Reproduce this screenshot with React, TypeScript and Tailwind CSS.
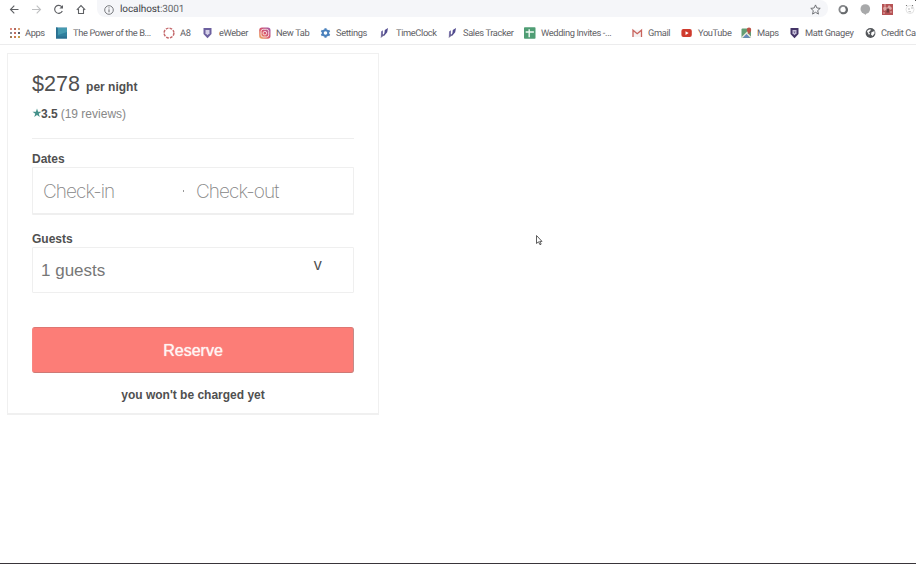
import React from "react";

function Glyph({ name }: { name: string }) {
  const p = { width: 12, height: 12, viewBox: "0 0 12 12", fill: "none", className: "shrink-0" };
  switch (name) {
    case "apps":
      return (
        <svg {...p}>
          {[1, 5, 9].map((y, r) =>
            [1, 5, 9].map((x, c) => (
              <rect key={x + "-" + y} x={x} y={y} width="2" height="2" fill={["#e08a7d", "#b06a62", "#d8a070", "#8a8a94", "#c06a60", "#59606c", "#a07a58", "#cc7a50", "#c4a04c"][r * 3 + c]} />
            ))
          )}
        </svg>
      );
    case "power":
      return (
        <svg {...p}>
          <rect y="0.5" width="11" height="11" fill="#2f7f9d" />
          <path d="M0 11.5V.5h1.500v9h9.500v2z" fill="#2a6e90" />
          <path d="M2 1h9v4L2 8z" fill="#459ab0" />
        </svg>
      );
    case "ring":
      return (
        <svg {...p}>
          <circle cx="6" cy="6" r="4.9" stroke="#c4686b" strokeWidth="1.5" strokeDasharray="2.7 1.15" />
        </svg>
      );
    case "shield":
    case "shieldDark":
      return (
        <svg {...p}>
          <path d="M1.500 1h8v6L5.500 11.200 1.500 7z" fill={name === "shield" ? "#6c609f" : "#443467"} />
          <path d="M3.500 3h4v3.200l-2 2-2-2z" fill={name === "shield" ? "#d5d0e8" : "#c6bfd8"} />
          {name === "shieldDark" && <path d="M4.500 4.500h2L5.500 6.500z" fill="#6c5e8c" />}
        </svg>
      );
    case "instagram":
      return (
        <svg {...p}>
          <defs>
            <linearGradient id="ig" x1="0" y1="1" x2="1" y2="0">
              <stop offset="0" stopColor="#efb05b" />
              <stop offset=".5" stopColor="#d8556e" />
              <stop offset="1" stopColor="#9a5cae" />
            </linearGradient>
          </defs>
          <rect x=".2" y=".5" width="11.300" height="11.300" rx="2.800" fill="url(#ig)" />
          <rect x="2" y="2.300" width="7.700" height="7.700" rx="2.200" stroke="#fbe5e6" strokeWidth=".9" />
          <circle cx="5.850" cy="6.150" r="1.800" stroke="#fbe5e6" strokeWidth=".9" />
        </svg>
      );
    case "gear":
      return (
        <svg {...p}>
          <circle cx="5.500" cy="6" r="2.800" stroke="#4b82bd" strokeWidth="2" />
          <path d="M5.500 1.200v2m0 5.600v2M1.300 3.600l1.800 1m4.800 2.800 1.800 1M1.300 8.400l1.800-1m4.800-2.800 1.800-1" stroke="#4b82bd" strokeWidth="2.100" />
        </svg>
      );
    case "swoosh":
      return (
        <svg {...p}>
          <path d="M1.800 10.500 2 4.500l2-1.300v4.300z" fill="#7d76ab" />
          <path d="M3.800 8.500 5.400 6.200l.4-3.200L9 1 8.200 5.200 5.500 8.500z" fill="#514b8f" />
          <path d="m1.600 11 1.600-4 2.400.9z" fill="#696391" />
        </svg>
      );
    case "sheet":
      return (
        <svg {...p}>
          <rect y=".3" width="11.500" height="11.500" rx=".8" fill="#4f9d74" />
          <path d="M5.200 2.200v8M1.700 5h8.200" stroke="#f0faf4" strokeWidth="1.400" />
        </svg>
      );
    case "gmail":
      return (
        <svg {...p}>
          <path d="M1.500 2.800h9V10h-9z" fill="#f6f2f2" />
          <path d="M2 10V3.200l4.200 3.500 4.300-3.500V10" stroke="#c8635d" strokeWidth="1.300" />
        </svg>
      );
    case "youtube":
      return (
        <svg {...p}>
          <rect x=".4" y="2" width="10.400" height="8" rx="2" fill="#cf3b2d" />
          <path d="m4.500 4.200 3.200 1.900-3.200 1.900z" fill="#fff" />
        </svg>
      );
    case "maps":
      return (
        <svg {...p}>
          <rect x=".5" y="1.500" width="9.500" height="9.500" rx="1" fill="#639d73" />
          <path d="m.8 10.800 4.700-4.500 4.500 4.500z" fill="#6688bd" />
          <path d="m1 10.500 7-7M5.500 6l4.500 4.500" stroke="#ece8db" strokeWidth="1.300" />
          <path d="M8 .5a2.200 2.200 0 0 0-2.200 2.200C5.800 4.500 8 7 8 7s2.200-2.500 2.200-4.300A2.200 2.200 0 0 0 8 .5z" fill="#bc5348" />
        </svg>
      );
    default:
      return (
        <svg {...p}>
          <circle cx="5.500" cy="6" r="4.900" fill="#54575b" />
          <path d="M2 4.200c1-1.500 3-2 4-1.500L4.800 4.400 3.500 5 5 6.500 4 8z" fill="#fff" />
          <path d="M6.500 5.200 9.500 4v2.500L7.500 9 6 7.500z" fill="#fff" />
        </svg>
      );
  }
}

const bookmarks = [
  { icon: "apps", label: "Apps", width: "w-[47px]", gap: "gap-[4px]" },
  { icon: "power", label: "The Power of the B...", width: "w-[107px]", gap: "gap-[5px]" },
  { icon: "ring", label: "A8", width: "w-[39px]", gap: "gap-[5px]" },
  { icon: "shield", label: "eWeber", width: "w-[57px]", gap: "gap-[5px]" },
  { icon: "instagram", label: "New Tab", width: "w-[61px]", gap: "gap-[5px]" },
  { icon: "gear", label: "Settings", width: "w-[59px]", gap: "gap-[4px]" },
  { icon: "swoosh", label: "TimeClock", width: "w-[68px]", gap: "gap-[5px]" },
  { icon: "swoosh", label: "Sales Tracker", width: "w-[77px]", gap: "gap-[4px]" },
  { icon: "sheet", label: "Wedding Invites -...", width: "w-[107px]", gap: "gap-[5px]" },
  { icon: "gmail", label: "Gmail", width: "w-[50px]", gap: "gap-[5px]" },
  { icon: "youtube", label: "YouTube", width: "w-[60px]", gap: "gap-[5px]" },
  { icon: "maps", label: "Maps", width: "w-[48px]", gap: "gap-[4px]" },
  { icon: "shieldDark", label: "Matt Gnagey", width: "w-[76px]", gap: "gap-[4px]" },
  { icon: "globe", label: "Credit Ca", width: "w-[51px]", gap: "gap-[4px]" },
];

function BrowserBar() {
  return (
    <header className="flex h-[45px] flex-col overflow-hidden border-b border-[#ececed] font-['Roboto',sans-serif] [text-rendering:geometricPrecision]">
      <div className="flex h-[19px] items-center">
        <svg width="97" height="19" viewBox="0 0 97 19" fill="none" className="shrink-0" strokeWidth="1.100">
          <path d="M18.500 9.500h-8m3.800-3.800-3.800 3.800 3.800 3.800" stroke="#5e6064" />
          <path d="M32 9.500h8.500m-3.800-3.800 3.800 3.800-3.800 3.800" stroke="#bfc0c2" />
          <path d="M62.300 11a4 4 0 1 1-.5-4.200" stroke="#5e6064" strokeWidth="1.200" />
          <path d="M63 5v3.600h-3.600z" fill="#5e6064" />
          <path d="m76.800 9.800 4.200-4.300 4.200 4.300m-6.700-.8v4.500h5V9" stroke="#5e6064" />
        </svg>
        <div className="flex h-[17px] w-[731px] shrink-0 items-center self-start rounded-b-lg rounded-tr-lg bg-[#f5f6f9] pl-[7px] pt-[2px]">
          <svg width="10" height="10" viewBox="0 0 10 10" fill="none" stroke="#696b6f">
            <circle cx="5" cy="5" r="4.300" strokeWidth=".9" />
            <path d="M5 4.300v3M5 2.400v1" />
          </svg>
          <span className="ml-[6px] pt-px text-[10px] leading-4 tracking-[-0.1px] text-[#65686c]">
            <span className="text-[#404246]">localhost</span>:3001
          </span>
          <svg className="ml-auto mr-[7px]" width="11" height="11" viewBox="0 0 24 24" fill="none" stroke="#65676b" strokeWidth="2">
            <path d="m12 2 3 6.700 7.300.8-5.500 4.900L18.400 22 12 18.100 5.600 22l1.600-7.600-5.500-4.900 7.300-.8z" />
          </svg>
        </div>
        <svg className="shrink-0" width="88" height="19" viewBox="828 0 88 19" fill="none">
          <circle cx="843" cy="9.500" r="3.600" stroke="#85878a" strokeWidth="1.900" />
          <path d="M845.600 6.900a3.600 3.600 0 0 1-4.300 5.800" stroke="#66696c" strokeWidth="1.900" />
          <circle cx="865.300" cy="9" r="4.800" fill="#a8a9aa" />
          <path d="m863.500 13 2 2 1-2z" fill="#a8a9aa" />
          <rect x="882" y="4" width="11" height="11" fill="#b65355" />
          <path d="m883 8 2-2 2 2 2-3 3 3-1 2-2-1-1 3-2-2-2 1z" fill="#dda8a5" />
          <path d="M886.500 8.500h2.500v4h-2.500z" fill="#713b3c" />
          <path d="M883 13h2m5-1h2m-8-7h2" stroke="#e3b2b0" />
          <circle cx="910" cy="9.500" r="4" stroke="#e3e3e3" />
          <path d="M906.500 5v1m6-1v1m-4 3h1m2-1h1" stroke="#777" strokeWidth="1.100" />
          <path d="m908.500 11.500 2.500.3" stroke="#c4c4c4" />
          <path d="M915 0h1v1h-1z" fill="#555" />
        </svg>
      </div>
      <nav className="flex h-[28px] shrink-0 items-center pl-[9px]">
        {bookmarks.map((b) => (
          <div key={b.label} className={`flex shrink-0 items-center whitespace-nowrap text-[9.300px] leading-3 tracking-[-0.38px] text-[#5f6165] ${b.width} ${b.gap}`}>
            <Glyph name={b.icon} />
            <span className="pt-[2px]">{b.label}</span>
          </div>
        ))}
      </nav>
    </header>
  );
}

function BookingCard() {
  return (
    <section className="ml-[7px] mt-2 flex h-[362px] w-[372px] flex-col border border-b-2 border-[#f0f0f0] px-6 pt-[16px] text-[#505050]">
      <div className="flex h-[27px] items-baseline gap-[6px]">
        <span className="text-[21.600px] leading-[27px]">$278</span>
        <b className="text-[12px] leading-[14px]">per night</b>
      </div>
      <div className="mt-[8px] flex h-4 items-center text-[12px] leading-4">
        <svg width="10" height="10" viewBox="0 0 20 20" fill="#44918a">
          <path d="m10 1 2.200 6.500H19l-5.500 4 2.100 6.500-5.600-4-5.600 4 2.100-6.500-5.500-4h6.800z" />
        </svg>
        <b className="-ml-px pt-px">3.5</b>
        <span className="ml-[3px] pt-px text-[#888]">(19 reviews)</span>
      </div>
      <div className="mt-[17px] h-px w-[322px] shrink-0 bg-[#eeeeee]" />
      <b className="mt-3 block h-[16px] text-[12px] leading-[17px]">Dates</b>
      <div className="flex h-[48px] w-[322px] shrink-0 items-center rounded-[1px] border border-b-2 border-[#efefef] font-['Inter',sans-serif] text-[19px] font-extralight tracking-[-0.95px] text-[#858585]">
        <span className="w-[150px] pl-[10px] pt-[3px]">Check-in</span>
        <i className="h-[2px] w-px bg-[#999]" />
        <span className="pl-[12px] pt-[3px]">Check-out</span>
      </div>
      <b className="mt-[16px] block h-[16px] text-[12px] leading-[17px]">Guests</b>
      <div className="flex h-[46px] w-[322px] shrink-0 items-center justify-between rounded-[1px] border border-[#efefef] pl-2 pr-[31px] text-[17px]">
        <span className="pt-[2px] text-[#777]">1 guests</span>
        <span className="mb-[9px] font-['Inter',sans-serif] text-[12px] font-medium">V</span>
      </div>
      <button className="mt-[34px] h-[46px] w-[322px] shrink-0 rounded-[3px] border border-b-[#ce7975] border-l-[#f88680] border-r-[#c38b88] border-t-[#df7672] bg-[#fc7d77] pt-[2px] text-[16px] text-[#fff4f1] [text-shadow:0_0_1px_#fff]">
        Reserve
      </button>
      <b className="mt-[14px] block w-[322px] text-center text-[12px] leading-[17px]">you won't be charged yet</b>
    </section>
  );
}

export default function App() {
  return (
    <div className="relative flex h-[564px] w-[916px] flex-col overflow-hidden bg-white font-['Liberation_Sans',Arial,sans-serif]">
      <BrowserBar />
      <main className="flex-1">
        <BookingCard />
      </main>
      <svg className="absolute left-[535px] top-[234px]" width="8" height="13" viewBox="0 0 8 13">
        <path d="M1.500 1.500v8l2-1.700 1.500 3 1.200-.7-1.500-2.700H7z" fill="#fff" stroke="#5d5d5d" />
      </svg>
      <div className="h-px shrink-0 bg-[#39353a]" />
    </div>
  );
}
